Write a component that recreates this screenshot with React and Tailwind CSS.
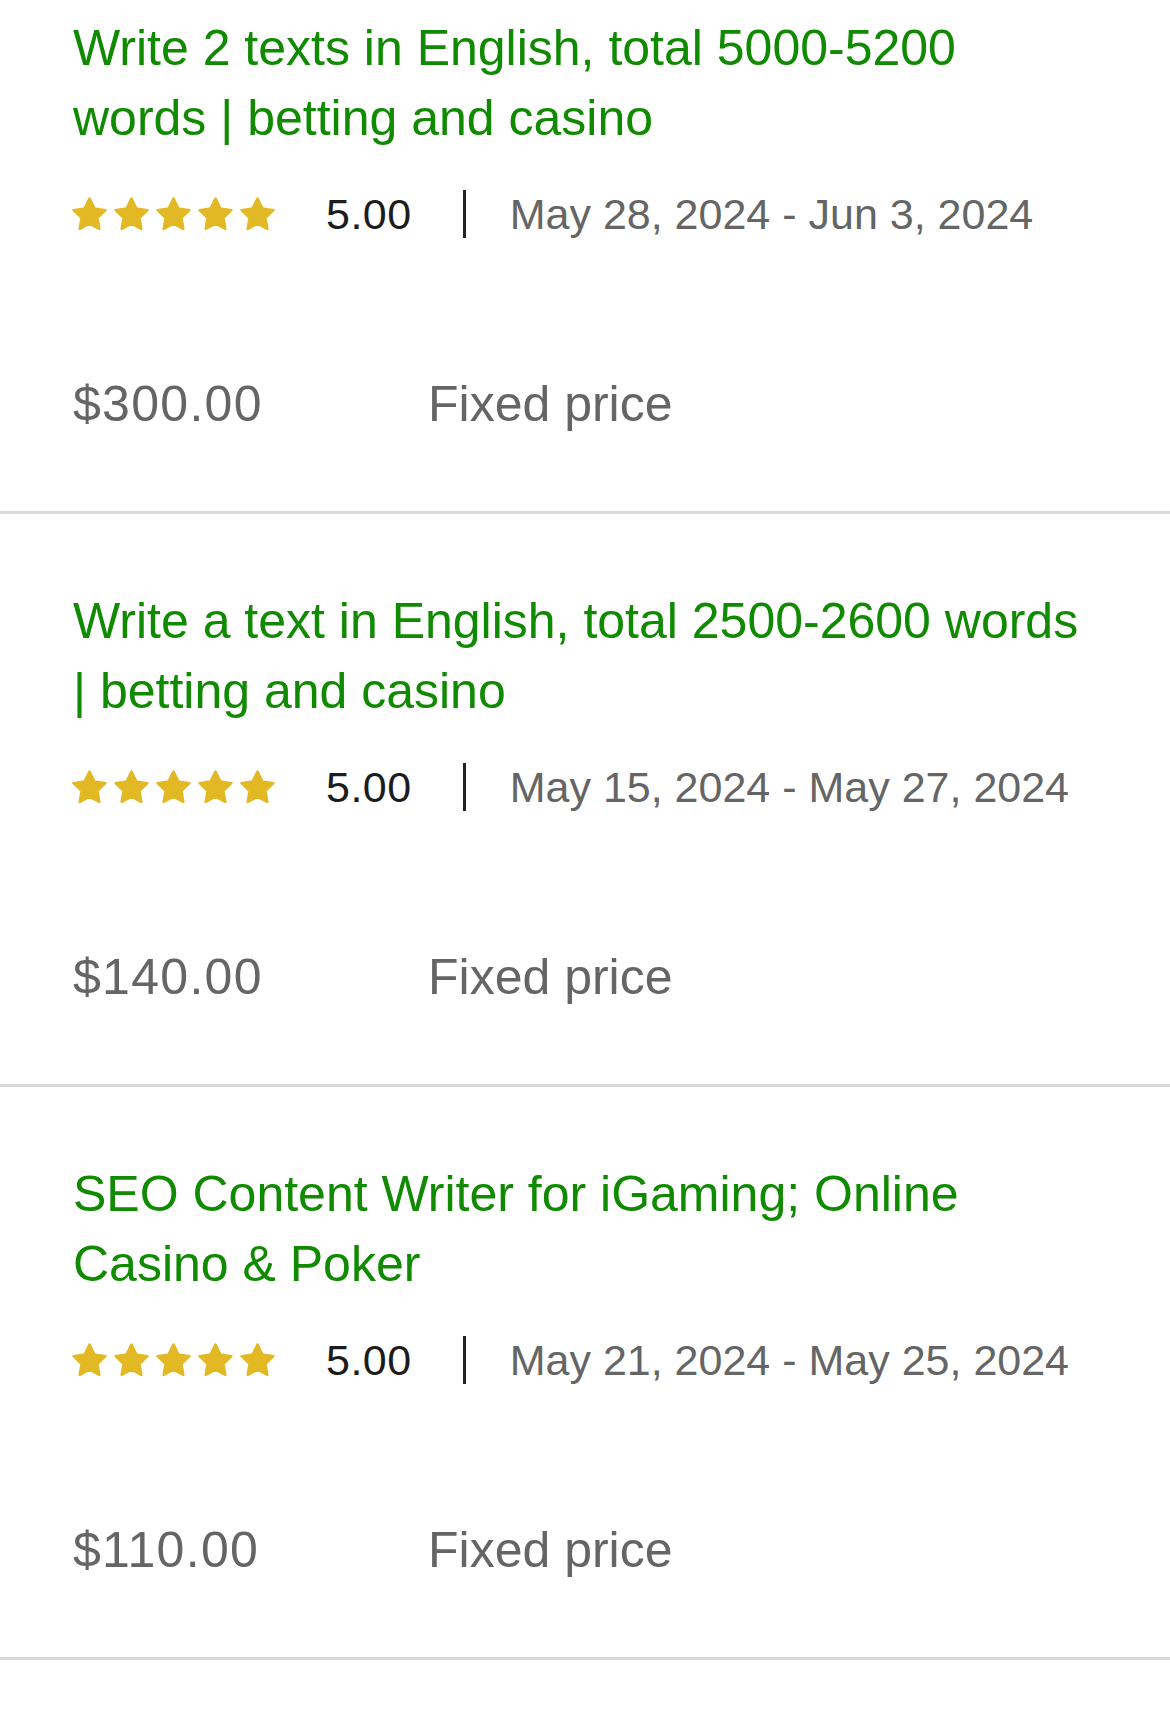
import React from "react";

const jobs = [
  {
    title: "Write 2 texts in English, total 5000-5200 words | betting and casino",
    rating: "5.00",
    dates: "May 28, 2024 - Jun 3, 2024",
    price: "$300.00",
  },
  {
    title: "Write a text in English, total 2500-2600 words | betting and casino",
    rating: "5.00",
    dates: "May 15, 2024 - May 27, 2024",
    price: "$140.00",
  },
  {
    title: "SEO Content Writer for iGaming; Online Casino & Poker",
    rating: "5.00",
    dates: "May 21, 2024 - May 25, 2024",
    price: "$110.00",
  },
];

function Star() {
  return (
    <svg width="35" height="35" viewBox="1 1.2 22 21.6" className="block">
      <polygon
        points="12,2 15.09,8.26 22,9.27 17,14.14 18.18,21.02 12,17.77 5.82,21.02 7,14.14 2,9.27 8.91,8.26"
        fill="#e2b925"
        stroke="#e2b925"
        strokeWidth="1.6"
        strokeLinejoin="round"
      />
    </svg>
  );
}

function Job({ job, first }) {
  return (
    <div
      className={`border-b-[3px] border-[#d9d9d9] px-[73px] pb-[77px] ${
        first ? "pt-[13px]" : "pt-[72px]"
      }`}
    >
      <div className="text-[50px] leading-[70px] text-[#108a00]">{job.title}</div>
      <div className="mt-[37px] flex h-[48px] items-center">
        <div className="flex gap-[7px] -ml-[1px]">
          <Star />
          <Star />
          <Star />
          <Star />
          <Star />
        </div>
        <span className="ml-[51px] text-[43px] leading-[48px] tracking-[0.5px] text-[#1c1c1c]">
          {job.rating}
        </span>
        <div className="ml-[51px] h-[48px] w-[3px] bg-[#222222]" />
        <span className="ml-[44px] text-[43px] leading-[48px] text-[#656565]">
          {job.dates}
        </span>
      </div>
      <div className="mt-[136px] flex h-[60px] items-center text-[50px] leading-[60px] text-[#656565]">
        <span className="w-[355px] shrink-0 tracking-[1.3px]">{job.price}</span>
        <span>Fixed price</span>
      </div>
    </div>
  );
}

export default function App() {
  return (
    <div
      className="min-h-[1714px] w-[1170px] bg-white"
      style={{ fontFamily: '"Liberation Sans", Arial, sans-serif' }}
    >
      {jobs.map((job, i) => (
        <Job key={i} job={job} first={i === 0} />
      ))}
    </div>
  );
}
